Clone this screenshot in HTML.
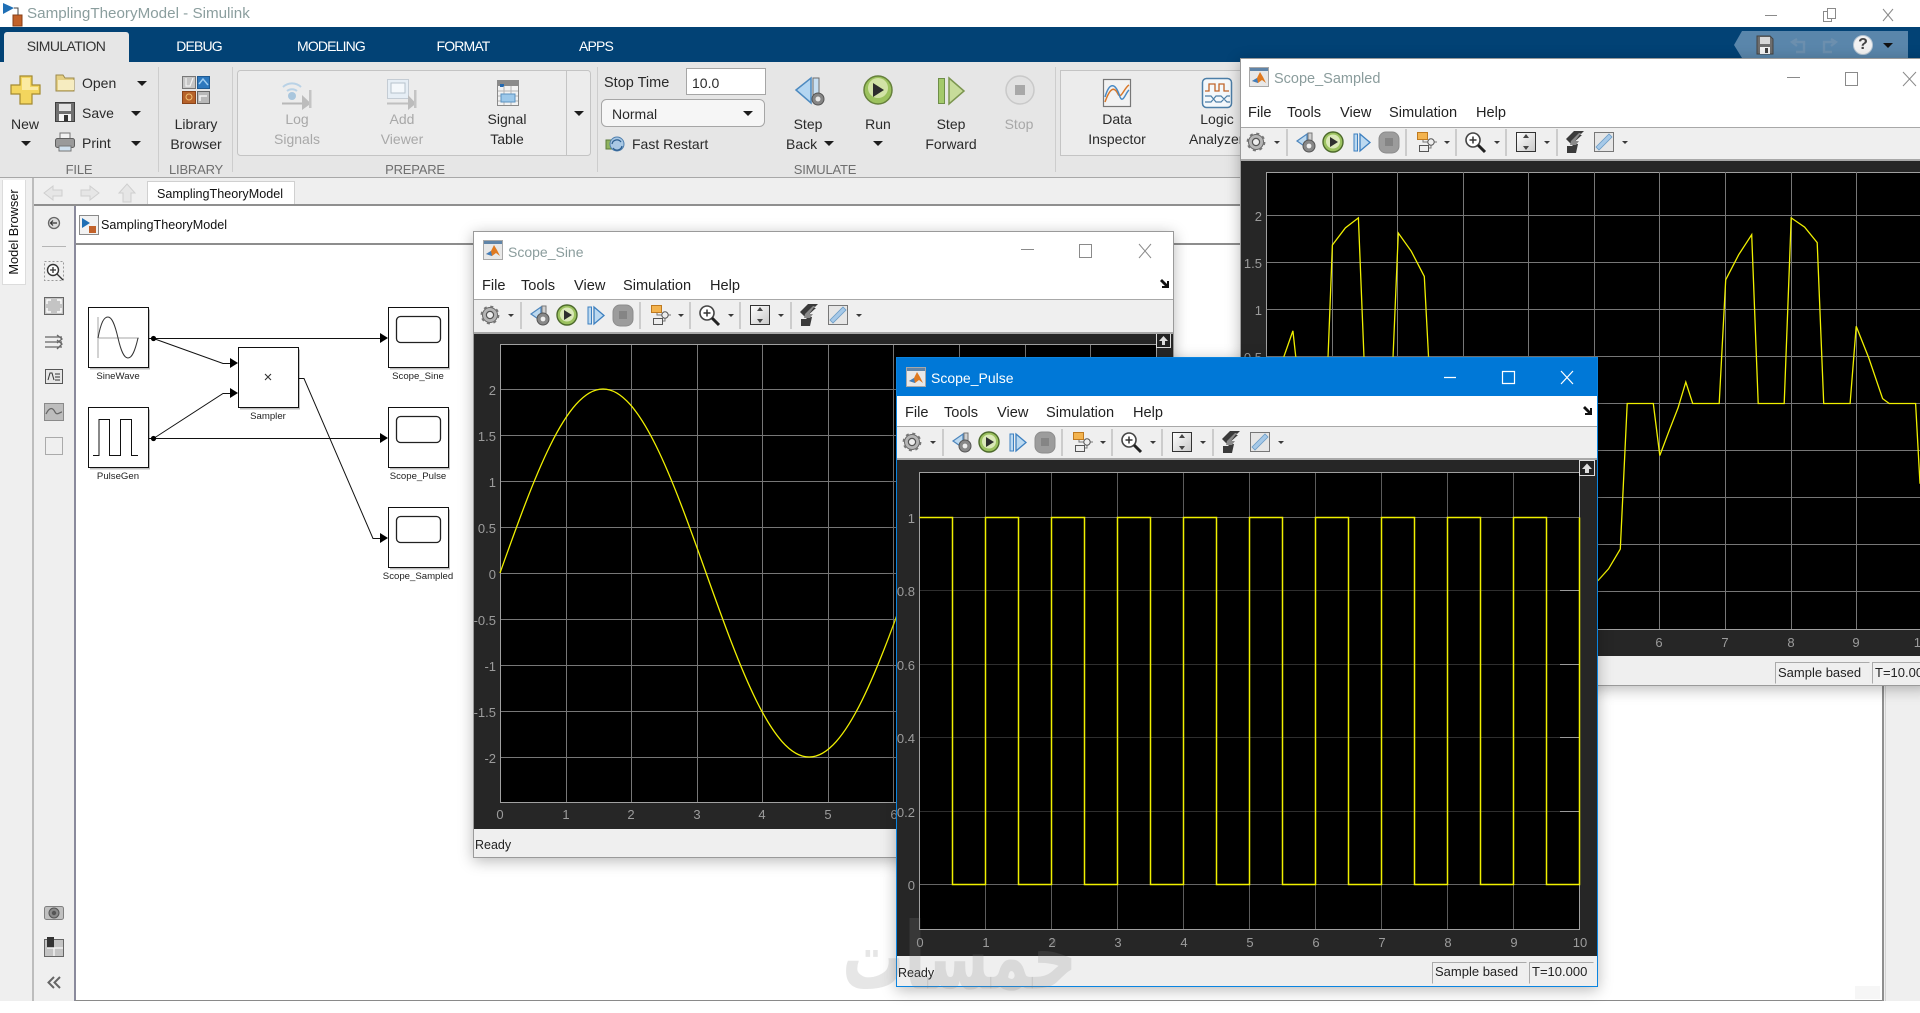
<!DOCTYPE html>
<html lang="en">
<head>
<meta charset="utf-8">
<title>SamplingTheoryModel - Simulink</title>
<style>
html,body{margin:0;padding:0;width:1920px;height:1001px;overflow:hidden;background:#fff;font-family:"Liberation Sans",sans-serif;color:#222}
.a{position:absolute}
.t{position:absolute;white-space:nowrap;line-height:20px;height:20px;font-size:14px;color:#2a2a2a}
.c{text-align:center;width:140px}
.dis{color:#a8a8a8}
.sec{font-size:13px;color:#6f6f6f;letter-spacing:-.2px}
.tab{font-size:14px;color:#fff;letter-spacing:-.85px}
.lbl{font-size:9.6px;color:#222;text-align:center;width:100px}
.win{position:absolute;background:#efefef;box-sizing:border-box;border:1px solid #9a9a9a;box-shadow:0 3px 14px rgba(0,0,0,.28)}
.menu{position:absolute;font-size:14.6px;color:#222;line-height:20px;white-space:nowrap}
.wt{position:absolute;font-size:14px;line-height:20px;color:#8a9c9c;white-space:nowrap}
.ax{position:absolute;font-size:13px;line-height:16px;color:#9c9c9c;white-space:nowrap}
.ax.r{text-align:right;width:30px}
.ax.m{text-align:center;width:30px}
.st{position:absolute;font-size:13px;line-height:20px;color:#222;white-space:nowrap}
.box{position:absolute;box-sizing:border-box;border-left:1px solid #aaa;border-top:1px solid #aaa;border-right:1px solid #eee;border-bottom:1px solid #eee}
svg{position:absolute;display:block;overflow:hidden}
</style>
</head>
<body>

<svg width="0" height="0" style="position:absolute">
<defs>
<symbol id="ml" viewBox="0 0 20 20">
<rect x=".5" y=".5" width="19" height="19" fill="#e8e8e8" stroke="#a8a8a8"/>
<rect x="1" y="1" width="18" height="3" fill="#5f84a8"/>
<path d="M3 14 L8 11 L11 5 L14 10 L17 16 L13 13 L9 16 Z" fill="#e07a20"/>
<path d="M3 14 L8 11 L9 16 Z" fill="#3f7fc0"/>
</symbol>
<symbol id="tb" viewBox="0 0 400 34">
<g fill="#3a3a3a">
<path d="M34 15h6l-3 3z"/><path d="M204 15h6l-3 3z"/><path d="M254 15h6l-3 3z"/><path d="M304 15h6l-3 3z"/><path d="M382 15h6l-3 3z"/>
</g>
<g stroke="#a8a8a8" stroke-width="1">
<path d="M47 3V30M166 3V30M216 3V30M266 3V30M317 3V30"/>
</g>
<circle cx="16" cy="16" r="7.5" fill="#b5b5b5" stroke="#666" stroke-width="1"/>
<circle cx="16" cy="16" r="8.4" fill="none" stroke="#777" stroke-width="2" stroke-dasharray="3 3.6"/>
<circle cx="16" cy="16" r="3.6" fill="#eee" stroke="#555" stroke-width="1.2"/>
<path d="M57 15 L67 8 V22 Z" fill="#bcd9f0" stroke="#4d86bd" stroke-width="1.2"/>
<rect x="68" y="7" width="4" height="12" fill="#d0d0d0" stroke="#777"/>
<circle cx="69" cy="20" r="6" fill="#888" stroke="#555"/><circle cx="69" cy="20" r="2.4" fill="#eee"/>
<circle cx="93" cy="16" r="10" fill="#9cc260" stroke="#4d6a2c" stroke-width="1.4"/>
<circle cx="93" cy="15.5" r="7" fill="#dbe9b8"/>
<path d="M90 11 L98 16 L90 21 Z" fill="#2f2f2f"/>
<rect x="114" y="8" width="3.5" height="17" fill="#bcd9f0" stroke="#3d80c0"/>
<path d="M120 8 L130 16.5 L120 25 Z" fill="#bcd9f0" stroke="#3d80c0" stroke-width="1.3"/>
<rect x="139" y="6" width="20" height="21" rx="7" fill="#9c9c9c" stroke="#8c8c8c"/>
<rect x="145" y="12" width="8" height="8" fill="#858585"/>
<path d="M183 13V16H188M194 16H197M191 19.500V22H189" fill="none" stroke="#777"/>
<rect x="177.500" y="6.500" width="10" height="7" fill="#f3b34e" stroke="#bf7a20"/>
<rect x="179.500" y="19.500" width="9" height="6" fill="#eee" stroke="#555"/>
<circle cx="191" cy="16" r="3.2" fill="#eee" stroke="#555"/>
<circle cx="233" cy="14" r="7" fill="#fff" stroke="#444" stroke-width="1.6"/>
<path d="M229.5 14h7M233 10.500v7" stroke="#333" stroke-width="1.5"/>
<path d="M238 19 L245 26" stroke="#222" stroke-width="3"/>
<defs><linearGradient id="sg" x1="0" y1="0" x2="1" y2="1"><stop offset="0" stop-color="#fff"/><stop offset="1" stop-color="#c8c8c8"/></linearGradient></defs>
<rect x="276.500" y="6.500" width="19" height="19" fill="url(#sg)" stroke="#333"/>
<path d="M286 8l-3 4h6zM286 24l-3-4h6z" fill="#444"/>
<path d="M334 5 H344 L340 9 H342 L332 18 H338 L336 27 H327 V20 H333 L326 13 Z" fill="#3a3a3a"/>
<path d="M331 15 L339 7 H341 L335 15 H339 L336 19 H330 Z" fill="#8a8a8a"/>
<rect x="354.500" y="6.500" width="19" height="19" fill="#e6e6e6" stroke="#777"/>
<path d="M356 21 L369 8 L372 11 L359 24 Z" fill="#a6c9e8" stroke="#6b9cc6" stroke-width=".8"/>
</symbol>
<symbol id="sb" viewBox="0 0 20 20">
<path d="M2 1H15L18 4V19H2Z" fill="#6e6e6e" stroke="#444"/>
<rect x="5" y="2" width="10" height="7" fill="#d8d8d8"/>
<rect x="5" y="12" width="10" height="7" fill="#f2f2f2"/>
<rect x="10" y="13" width="3" height="5" fill="#444"/>
</symbol>
</defs>
</svg>

<!-- Main window background -->
<div class="a" style="left:0;top:0;width:1920px;height:27px;background:#fff"></div>
<div class="a" style="left:0;top:27px;width:1920px;height:35px;background:#024275"></div>
<div class="a" style="left:4px;top:32px;width:125px;height:30px;background:#e6e6e6;border-radius:3px 3px 0 0"></div>
<div class="a" style="left:0;top:62px;width:1920px;height:115px;background:#e6e6e6"></div>
<div class="a" style="left:0;top:177px;width:1920px;height:1px;background:#a8a8a8"></div>
<div class="a" style="left:0;top:178px;width:1920px;height:823px;background:#efefef"></div>
<div class="a" style="left:34px;top:204px;width:1850px;height:2px;background:#8f8f8f"></div>
<div class="a" style="left:75px;top:206px;width:1808px;height:37px;background:#fff"></div>
<div class="a" style="left:75px;top:243px;width:1808px;height:2px;background:#8d8d8d"></div>
<div class="a" style="left:75px;top:245px;width:1808px;height:755px;background:#fff"></div>
<div class="a" style="left:74px;top:206px;width:1.500px;height:795px;background:#8a8a9c"></div>
<div class="a" style="left:75px;top:1000px;width:1808px;height:1px;background:#8a8a8a"></div>
<div class="a" style="left:1882px;top:206px;width:1.500px;height:795px;background:#8f8f8f"></div>
<div class="a" style="left:1885px;top:206px;width:1px;height:795px;background:#d4d4d4"></div>
<div class="a" style="left:32px;top:178px;width:1.500px;height:823px;background:#bdbdbd"></div>
<div class="a" style="left:2px;top:180px;width:24px;height:105px;background:#fff;border:1px solid #dcdcdc;border-top:none;box-sizing:border-box"></div>
<div class="a" style="left:147px;top:181px;width:148px;height:23px;background:#fff;border:1px solid #d0d0d0;border-bottom:none;box-sizing:border-box"></div>
<div class="a" style="left:1855px;top:986px;width:25px;height:13px;background:#f6f6f6"></div>

<!-- Page graphics -->
<svg class="a" style="left:0;top:0" width="1920" height="1001" viewBox="0 0 1920 1001">
<!-- app icon -->
<path d="M3 3 L14 8 L3 14 Z" fill="#1f6fb5"/><rect x="13" y="15" width="9" height="11" fill="#c2622a" stroke="#8a3f15"/>
<path d="M14 8 H18 V15" fill="none" stroke="#444"/>
<!-- ribbon separators -->
<path d="M158.500 67V172M232.500 67V172M597.500 67V172M1055.500 67V172" stroke="#cdcdcd"/>
<rect x="237.500" y="70.500" width="353" height="85" rx="3" fill="#ececec" stroke="#c4c4c4"/>
<path d="M566.500 71V155" stroke="#c4c4c4"/>
<rect x="1060.500" y="70.500" width="190" height="85" fill="#ececec" stroke="#c4c4c4"/>
<!-- Stop time input -->
<rect x="686.500" y="68.500" width="79" height="26" fill="#fff" stroke="#a6a6a6"/>
<rect x="601.500" y="99.500" width="163" height="27" rx="5" fill="#f6f6f6" stroke="#a6a6a6"/>
<!-- arrows -->
<g fill="#1c1c1c">
<path d="M21 141h10l-5 5z"/><path d="M137 81h10l-5 5z"/><path d="M131 111h10l-5 5z"/><path d="M131 141h10l-5 5z"/>
<path d="M574 111h10l-5 5z"/><path d="M743 111h10l-5 5z"/><path d="M824 141h10l-5 5z"/><path d="M873 141h10l-5 5z"/>
</g>
<!-- New -->
<path d="M20 76H32V85H40V94H32V104H20V94H11V85H20Z" fill="#f3d55e" stroke="#a48a30" stroke-width="1.200"/>
<path d="M22 78H30V87H38V90H22Z" fill="#fbeaa2"/>
<!-- Open -->
<path d="M56 75H63L65 78H74V91H56Z" fill="#e5cf82" stroke="#9c8a4c"/>
<path d="M58 80H74V90H58Z" fill="#f6ecc0"/>
<!-- Save -->
<rect x="55.500" y="102.500" width="19" height="19" fill="#707070" stroke="#3f3f3f"/>
<rect x="59" y="104" width="12" height="7" fill="#e4e4e4"/>
<rect x="59" y="114" width="12" height="7" fill="#f5f5f5"/>
<rect x="64" y="115" width="4" height="6" fill="#333"/>
<!-- Print -->
<rect x="60" y="133" width="10" height="6" fill="#f2f2f2" stroke="#777"/>
<rect x="55.500" y="138.500" width="19" height="9" rx="2" fill="#9a9a9a" stroke="#5f5f5f"/>
<rect x="59" y="146" width="12" height="5" fill="#cfe0ee" stroke="#777"/>
<!-- Library -->
<rect x="182.500" y="76.500" width="13" height="12" fill="#c5c5c5" stroke="#777"/>
<path d="M186 78V86H190L193 78" fill="none" stroke="#f2f2f2" stroke-width="1.200"/>
<rect x="197.500" y="76.500" width="12" height="12" fill="#2e78bd" stroke="#1f5a92"/>
<path d="M199 84 L203 79 L208 85" stroke="#9ccbf0" stroke-width="1.500" fill="none"/>
<rect x="182.500" y="91.500" width="13" height="12" fill="#b6622a" stroke="#8a4318"/>
<circle cx="189" cy="97" r="3" fill="none" stroke="#f0c070"/>
<rect x="197.500" y="91.500" width="12" height="12" fill="#b8b8b8" stroke="#666"/>
<path d="M200 101V96H207" fill="none" stroke="#f2f2f2" stroke-width="1.500"/>
<!-- Log signals -->
<g fill="none" stroke="#b9d2e6" stroke-width="2"><path d="M283 87a13 13 0 0 1 18 0"/><path d="M287 91a8 8 0 0 1 10 0"/></g>
<circle cx="292" cy="96" r="4" fill="#a9c6dd"/>
<path d="M282 103.500H303" stroke="#b8b8b8" stroke-width="2"/>
<path d="M302 95L311 103.500L302 110Z" fill="#bcbcbc"/>
<rect x="309" y="90" width="2.500" height="18" fill="#c4c4c4"/>
<!-- Add viewer -->
<rect x="387.500" y="79.500" width="21" height="19" fill="#e6eef5" stroke="#c4ccd4"/>
<rect x="391" y="83" width="14" height="10" fill="#f4f8fb" stroke="#b6c2cc"/>
<path d="M387 103.500H409" stroke="#c0c0c0" stroke-width="2"/>
<path d="M408 95L416 103.500L408 110Z" fill="#bcbcbc"/>
<rect x="414" y="90" width="2.500" height="18" fill="#c4c4c4"/>
<!-- Signal table -->
<rect x="497.500" y="80.500" width="21" height="25" fill="#f2f2f2" stroke="#8a8a8a"/>
<rect x="498" y="81" width="20" height="5" fill="#8a8a8a"/>
<rect x="500" y="84" width="4" height="3" fill="#2268b0"/>
<path d="M498 91H518M498 96H518M498 101H518M504 86V105M511 86V105" stroke="#b4b4b4"/>
<rect x="501" y="94" width="14" height="8" fill="#9cc8ea" stroke="#5b92c0"/>
<!-- Fast restart -->
<rect x="606" y="140" width="6" height="9" fill="#8fb35f" stroke="#5a7a3a"/>
<circle cx="617" cy="144" r="7" fill="#a9c8e4" stroke="#4f7fae"/>
<path d="M612 144a5 5 0 0 1 9-2M622 146a5 5 0 0 1-9 2" fill="none" stroke="#2d5e8f" stroke-width="1.300"/>
<!-- Step back -->
<path d="M796 90 L811 78 V103 Z" fill="#b4d6f1" stroke="#4d8ac0" stroke-width="1.500"/>
<rect x="813" y="78" width="6" height="24" fill="#c7dff3" stroke="#6c6c6c"/>
<circle cx="818" cy="99" r="6" fill="#858585" stroke="#555"/><circle cx="818" cy="99" r="2.500" fill="#e6e6e6"/>
<!-- Run -->
<circle cx="878" cy="90" r="14" fill="#9cc25e" stroke="#66813c" stroke-width="1.500"/>
<circle cx="878" cy="88" r="10" fill="#d2e3a6"/>
<path d="M873 83 L884 90 L873 97 Z" fill="#2d2d2d"/>
<!-- Step forward -->
<rect x="938.500" y="78.500" width="6" height="25" fill="#a3c96b" stroke="#6e8e48"/>
<path d="M949 78 L964 91 L949 104 Z" fill="#c7dc9a" stroke="#7c9650" stroke-width="1.500"/>
<!-- Stop -->
<circle cx="1020" cy="90" r="14" fill="#e1e1e1" stroke="#c9c9c9" stroke-width="1.500"/>
<rect x="1015" y="85" width="10" height="10" fill="#a8a8a8"/>
<!-- Data inspector -->
<rect x="1103.500" y="79.500" width="27" height="27" fill="#f2f2f2" stroke="#777" stroke-width="1.200"/>
<path d="M1105 102 C1110 88 1114 86 1118 94 C1121 100 1124 88 1129 85" fill="none" stroke="#d9782a" stroke-width="1.500"/>
<path d="M1105 97 C1110 80 1116 84 1120 97 C1123 104 1126 92 1129 90" fill="none" stroke="#4a8ac4" stroke-width="1.500"/>
<!-- Logic analyzer -->
<rect x="1202.500" y="78.500" width="29" height="29" rx="4" fill="#f4f8fb" stroke="#4d7fa8" stroke-width="1.500"/>
<path d="M1205 91H1209V84H1215V91H1219V84H1224V91H1229" fill="none" stroke="#c0642a" stroke-width="1.300"/>
<path d="M1205 96H1211L1216 102H1221L1227 96H1230M1205 102H1211L1216 96H1221L1227 102H1230" fill="none" stroke="#4d7fa8" stroke-width="1.200"/>
<!-- Title buttons -->
<path d="M1765 15.500H1777" stroke="#8a8a8a"/>
<rect x="1823.500" y="11.500" width="8" height="10" fill="#fff" stroke="#8a8a8a"/>
<rect x="1827.500" y="8.500" width="8" height="10" fill="#fff" stroke="#8a8a8a"/>
<path d="M1883 9L1893 21M1893 9L1883 21" stroke="#8a8a8a"/>
<!-- Quick access -->
<path d="M1734 45L1742 31H1908V58H1742Z" fill="#5a86ab"/>
<use href="#sb" x="1755" y="34" width="20" height="22"/>
<path d="M1792 42H1804V52H1796M1797 39L1792 42L1797 46" fill="none" stroke="#6c8fae" stroke-width="2.400"/>
<path d="M1836 42H1824V52H1832M1831 39L1836 42L1831 46" fill="none" stroke="#6c8fae" stroke-width="2.400"/>
<circle cx="1863" cy="45" r="9.500" fill="#f2f2f2" stroke="#b4c4d2"/>
<path d="M1883 43h10l-5 5z" fill="#111"/>
<!-- Breadcrumb arrows -->
<g fill="#e6e6e6" stroke="#cfcfcf">
<path d="M44 193L53 186V190H62V196H53V200Z"/>
<path d="M99 193L90 186V190H81V196H90V200Z"/>
<path d="M127 184L135 193H131V202H123V193H119Z"/>
</g>
<!-- Address -->
<rect x="79.500" y="215.500" width="19" height="19" fill="#f2f2f2" stroke="#8a8a8a"/>
<path d="M82 218L90 223L82 228Z" fill="#1f6fb5"/><rect x="89" y="226" width="7" height="7" fill="#c2622a"/>
<!-- left strip -->
<circle cx="54" cy="223" r="5.500" fill="#dcdcdc" stroke="#666" stroke-width="1.300"/>
<path d="M57 223H51M53 220.500L50.500 223L53 225.500" fill="none" stroke="#333" stroke-width="1.200"/>
<path d="M42 246.500H66" stroke="#b5b5b5"/>
<rect x="44.500" y="261.500" width="19" height="19" fill="#efefef" stroke="#999" stroke-dasharray="2 2"/>
<circle cx="53" cy="270" r="5.500" fill="#fff" stroke="#333" stroke-width="1.400"/>
<path d="M50 270H56M53 267V273M57 274L63 280" stroke="#333" stroke-width="1.300"/>
<rect x="44.500" y="297.500" width="19" height="17" fill="#c4c4c4" stroke="#666"/>
<path d="M47 304V300H51M61 304V300H57M47 308V312H51M61 308V312H57" fill="none" stroke="#fff" stroke-width="1.400"/>
<path d="M45 337H62M45 342H62M45 347H62M57 335L62 339L57 343M57 340L62 344L57 349" fill="none" stroke="#666" stroke-width="1.300"/>
<rect x="45.500" y="369.500" width="17" height="14" fill="#e6e6e6" stroke="#555"/>
<path d="M48 380L50 373H52L54 380M55 374H60M55 377H60M55 380H60" fill="none" stroke="#333"/>
<rect x="44.500" y="403.500" width="19" height="17" fill="#bdbdbd" stroke="#8a8a8a"/>
<path d="M46 414C50 406 53 408 55 412C57 416 60 412 62 412" fill="none" stroke="#666" stroke-width="1.300"/>
<rect x="45.500" y="437.500" width="17" height="17" fill="#efefef" stroke="#aaa"/>
<rect x="44.500" y="906.500" width="19" height="13" rx="2" fill="#c0c0c0" stroke="#808080"/>
<circle cx="54" cy="913" r="5" fill="#8a8a8a" stroke="#555"/><circle cx="54" cy="913" r="2.200" fill="#555"/>
<rect x="44.500" y="939.500" width="19" height="17" fill="#c4c4c4" stroke="#666"/>
<rect x="47" y="937" width="7" height="11" fill="#333"/>
<path d="M47 948H63M54 948V956" stroke="#f2f2f2" stroke-width="1.500"/>
<path d="M54 977L48.500 982.500L54 988M60 977L54.500 982.500L60 988" fill="none" stroke="#666" stroke-width="2"/>

<!-- Model blocks -->
<g fill="rgba(0,0,0,.25)">
<rect x="90" y="309.500" width="60" height="60"/><rect x="90" y="409.500" width="60" height="60"/><rect x="240" y="349.500" width="60" height="60"/>
<rect x="390" y="309.500" width="60" height="60"/><rect x="390" y="409.500" width="60" height="60"/><rect x="390" y="509.500" width="60" height="60"/>
</g>
<g fill="#fff" stroke="#111" stroke-width="1">
<rect x="88.500" y="307.500" width="60" height="60"/><rect x="88.500" y="407.500" width="60" height="60"/><rect x="238.500" y="347.500" width="60" height="60"/>
<rect x="388.500" y="307.500" width="60" height="60"/><rect x="388.500" y="407.500" width="60" height="60"/><rect x="388.500" y="507.500" width="60" height="60"/>
</g>
<g fill="none" stroke="#222" stroke-width="1.300">
<rect x="396.500" y="316.500" width="44" height="26" rx="4"/><rect x="396.500" y="416.500" width="44" height="26" rx="4"/><rect x="396.500" y="516.500" width="44" height="26" rx="4"/>
</g>
<path d="M98 317V358M98 338H139" stroke="#c4c4c4" stroke-width="1.500"/>
<path d="M98 338C101 322 104 317 108 317C112 317 115 325 118 338C121 351 124 358 128 358C132 358 135 351 138 338" fill="none" stroke="#333"/>
<path d="M93 455.500H99V419.500H109.500V455.500H120.500V419.500H131.500V455.500H138" fill="none" stroke="#111"/>
<path d="M265 374L271 380M271 374L265 380" stroke="#333" stroke-width="1.100"/>
<!-- Wires -->
<g fill="none" stroke="#111" stroke-width="1">
<path d="M149 338.500H380"/><path d="M149 438.500H380"/>
<path d="M153.500 338.500L223 363.500H231"/><path d="M153.500 438.500L223 393.500H231"/>
<path d="M299 378.500H304L373 538.500H381"/>
</g>
<g fill="#000">
<circle cx="153.500" cy="338.500" r="2.600"/><circle cx="153.500" cy="438.500" r="2.600"/>
<path d="M388 338L380 333V343Z"/><path d="M388 438L380 433V443Z"/><path d="M388 538L380 533V543Z"/>
<path d="M238 363L230 358V368Z"/><path d="M238 393L230 388V398Z"/>
</g>
</svg>

<!-- Page text -->
<div class="t" style="left:27px;top:4px;font-size:15.200px;color:#8b9e9e">SamplingTheoryModel - Simulink</div>
<div class="t c tab" style="left:-4px;top:36px;color:#333;letter-spacing:-.6px">SIMULATION</div>
<div class="t c tab" style="left:129px;top:36px">DEBUG</div>
<div class="t c tab" style="left:261px;top:36px">MODELING</div>
<div class="t c tab" style="left:393px;top:36px">FORMAT</div>
<div class="t c tab" style="left:526px;top:36px">APPS</div>
<div class="t" style="left:1857px;top:35px;font-weight:bold;font-size:16px;color:#444;width:12px;text-align:center">?</div>

<div class="t c" style="left:-45px;top:114px">New</div>
<div class="t" style="left:82px;top:73px">Open</div>
<div class="t" style="left:82px;top:103px">Save</div>
<div class="t" style="left:82px;top:133px">Print</div>
<div class="t c sec" style="left:9px;top:160px">FILE</div>
<div class="t c" style="left:126px;top:114px">Library</div>
<div class="t c" style="left:126px;top:134px">Browser</div>
<div class="t c sec" style="left:126px;top:160px">LIBRARY</div>
<div class="t c dis" style="left:227px;top:109px">Log</div>
<div class="t c dis" style="left:227px;top:129px">Signals</div>
<div class="t c dis" style="left:332px;top:109px">Add</div>
<div class="t c dis" style="left:332px;top:129px">Viewer</div>
<div class="t c" style="left:437px;top:109px">Signal</div>
<div class="t c" style="left:437px;top:129px">Table</div>
<div class="t c sec" style="left:345px;top:160px">PREPARE</div>
<div class="t" style="left:604px;top:73px;font-size:14.500px">Stop Time</div>
<div class="t" style="left:692px;top:73px">10.0</div>
<div class="t" style="left:612px;top:104px">Normal</div>
<div class="t" style="left:632px;top:134px">Fast Restart</div>
<div class="t c" style="left:738px;top:114px">Step</div>
<div class="t" style="left:786px;top:134px">Back</div>
<div class="t c" style="left:808px;top:114px">Run</div>
<div class="t c" style="left:881px;top:114px">Step</div>
<div class="t c" style="left:881px;top:134px">Forward</div>
<div class="t c dis" style="left:949px;top:114px">Stop</div>
<div class="t c sec" style="left:755px;top:160px">SIMULATE</div>
<div class="t c" style="left:1047px;top:109px">Data</div>
<div class="t c" style="left:1047px;top:129px">Inspector</div>
<div class="t c" style="left:1147px;top:109px">Logic</div>
<div class="t" style="left:1189px;top:129px">Analyzer</div>

<div class="t" style="left:-36px;top:222px;width:100px;text-align:center;font-size:12.800px;color:#111;transform:rotate(-90deg)">Model Browser</div>
<div class="t" style="left:157px;top:184px;font-size:12.600px;color:#111">SamplingTheoryModel</div>
<div class="t" style="left:101px;top:215px;font-size:12.600px;color:#111">SamplingTheoryModel</div>

<div class="t lbl" style="left:68px;top:367px">SineWave</div>
<div class="t lbl" style="left:68px;top:467px">PulseGen</div>
<div class="t lbl" style="left:218px;top:407px">Sampler</div>
<div class="t lbl" style="left:368px;top:367px">Scope_Sine</div>
<div class="t lbl" style="left:368px;top:467px">Scope_Pulse</div>
<div class="t lbl" style="left:368px;top:567px">Scope_Sampled</div>

<!-- Scope_Sampled -->
<div class="win" style="left:1240px;top:58px;width:690px;height:628px">
  <div class="a" style="left:0;top:0;width:100%;height:68px;background:#fff;border-bottom:1px solid #a8a8a8"></div>
  <div class="a" style="left:0;top:100px;width:100%;height:2px;background:#a8a8a8"></div>
  <div class="a" style="left:0;top:102px;width:100%;height:495px;background:#262626"></div>
</div>
<svg style="left:1249px;top:67px" width="20" height="20"><use href="#ml" width="20" height="20"/></svg>
<div class="wt" style="left:1274px;top:69px;font-size:14.500px">Scope_Sampled</div>
<svg style="left:1240px;top:59px" width="680" height="40"><path d="M547 18.500H560M605.500 13.500H617.500V26.500H605.500ZM663 13L676 27M676 13L663 27" fill="none" stroke="#8a8a8a"/></svg>
<div class="menu" style="left:1248px;top:103px">File</div>
<div class="menu" style="left:1287px;top:103px">Tools</div>
<div class="menu" style="left:1340px;top:103px">View</div>
<div class="menu" style="left:1389px;top:103px">Simulation</div>
<div class="menu" style="left:1476px;top:103px">Help</div>
<svg style="left:1240px;top:126px" width="400" height="34"><use href="#tb" width="400" height="34"/></svg>
<svg style="left:1240px;top:160px" width="680" height="500" viewBox="1240 160 680 500">
  <rect x="1266.500" y="172.500" width="700" height="457" fill="#000" stroke="#a0a0a0"/>
  <path d="M1332.500 172V629M1397.500 172V629M1463.500 172V629M1528.500 172V629M1594.500 172V629M1659.500 172V629M1725.500 172V629M1791.500 172V629M1856.500 172V629M1267 215.500H1920M1267 262.500H1920M1267 309.500H1920M1267 356.500H1920M1267 403.500H1920M1267 450.500H1920M1267 497.500H1920M1267 544.500H1920M1267 591.500H1920" stroke="#777"/>
  <path d="M1283.400 358L1292.900 330.800L1295.900 358M1328 358L1332.400 245L1345.400 227.800L1358.400 217.900L1364 358M1393 358L1398.300 233L1411.300 251.300L1424.300 276.400L1428.600 358M1597.800 580.800L1608.600 568.800L1620.300 549.100L1627.200 403.500H1653.300L1659.800 455.500L1669.300 430.300L1678 408L1685.800 382.100L1692.700 403.500H1719.200L1725.700 279.800L1738.700 254.700L1751.700 234.700L1758.200 403.500H1784.200L1791.200 217.900L1804.600 227.100L1817.200 242.600L1823.700 403.500H1850.100L1856.200 326.300L1868.800 358L1882.600 398.600L1889.200 403.500H1915.600L1920 483.700" fill="none" stroke="#f0f000" stroke-width="1.300"/>
</svg>
<div class="ax r" style="left:1232px;top:209px">2</div>
<div class="ax r" style="left:1232px;top:256px">1.5</div>
<div class="ax r" style="left:1232px;top:303px">1</div>
<div class="ax r" style="left:1232px;top:350px">0.5</div>
<div class="ax m" style="left:1644px;top:635px">6</div>
<div class="ax m" style="left:1710px;top:635px">7</div>
<div class="ax m" style="left:1776px;top:635px">8</div>
<div class="ax m" style="left:1841px;top:635px">9</div>
<div class="ax m" style="left:1906px;top:635px">10</div>
<div class="box" style="left:1775px;top:662px;width:95px;height:22px"></div>
<div class="box" style="left:1872px;top:662px;width:60px;height:22px"></div>
<div class="st" style="left:1778px;top:663px">Sample based</div>
<div class="st" style="left:1875px;top:663px">T=10.000</div>

<!-- Scope_Sine -->
<div class="win" style="left:473px;top:231px;width:701px;height:627px">
  <div class="a" style="left:0;top:0;width:100%;height:67px;background:#fff;border-bottom:1px solid #a8a8a8"></div>
  <div class="a" style="left:0;top:100px;width:100%;height:2px;background:#a8a8a8"></div>
  <div class="a" style="left:0;top:102px;width:100%;height:495px;background:#262626"></div>
</div>
<svg style="left:483px;top:240px" width="20" height="20"><use href="#ml" width="20" height="20"/></svg>
<div class="wt" style="left:508px;top:242px">Scope_Sine</div>
<svg style="left:474px;top:231px" width="700" height="40"><path d="M547 18.500H560M605.500 13.500H617.500V26.500H605.500ZM665 13L677 27M677 13L665 27" fill="none" stroke="#8a8a8a"/></svg>
<div class="menu" style="left:482px;top:276px">File</div>
<div class="menu" style="left:521px;top:276px">Tools</div>
<div class="menu" style="left:574px;top:276px">View</div>
<div class="menu" style="left:623px;top:276px">Simulation</div>
<div class="menu" style="left:710px;top:276px">Help</div>
<svg style="left:1159px;top:278px" width="12" height="12"><path d="M1 3L3 1L8 6V3H10V10H3V8H6Z" fill="#111"/></svg>
<svg style="left:474px;top:299px" width="400" height="34"><use href="#tb" width="400" height="34"/></svg>
<svg style="left:474px;top:334px" width="700" height="496" viewBox="474 334 700 496">
  <rect x="500.500" y="344.500" width="656" height="458" fill="#000" stroke="#a0a0a0"/>
  <path d="M566.500 345V802M631.500 345V802M697.500 345V802M762.500 345V802M828.500 345V802M893.500 345V802M959.500 345V802M1025.500 345V802M1090.500 345V802M501 389.500H1156M501 435.500H1156M501 481.500H1156M501 527.500H1156M501 573.500H1156M501 619.500H1156M501 665.500H1156M501 711.500H1156M501 757.500H1156" stroke="#777"/>
  <path d="M500 573C533.600 478.700 565.750 389 603.040 389C640.330 389 672.480 478.700 706.080 573C739.690 667.300 771.830 757 809.120 757C846.410 757 878.560 667.300 912.160 573" fill="none" stroke="#f0f000" stroke-width="1.300"/>
  <rect x="1156.500" y="333.500" width="14" height="14" fill="#222" stroke="#ddd"/>
  <path d="M1163.500 336L1168 341H1165V345H1162V341H1159Z" fill="#ddd"/>
</svg>
<div class="ax r" style="left:466px;top:383px">2</div>
<div class="ax r" style="left:466px;top:429px">1.5</div>
<div class="ax r" style="left:466px;top:475px">1</div>
<div class="ax r" style="left:466px;top:521px">0.5</div>
<div class="ax r" style="left:466px;top:567px">0</div>
<div class="ax r" style="left:466px;top:613px">-0.5</div>
<div class="ax r" style="left:466px;top:659px">-1</div>
<div class="ax r" style="left:466px;top:705px">-1.5</div>
<div class="ax r" style="left:466px;top:751px">-2</div>
<div class="ax m" style="left:485px;top:807px">0</div>
<div class="ax m" style="left:551px;top:807px">1</div>
<div class="ax m" style="left:616px;top:807px">2</div>
<div class="ax m" style="left:682px;top:807px">3</div>
<div class="ax m" style="left:747px;top:807px">4</div>
<div class="ax m" style="left:813px;top:807px">5</div>
<div class="ax m" style="left:879px;top:807px">6</div>
<div class="st" style="left:475px;top:835px;font-size:12.500px">Ready</div>

<!-- Scope_Pulse -->
<div class="win" style="left:896px;top:357px;width:702px;height:630px;border:1.500px solid #0a84e0">
  <div class="a" style="left:0;top:0;width:100%;height:38px;background:#0078d7"></div>
  <div class="a" style="left:0;top:38px;width:100%;height:30px;background:#fff;border-bottom:1px solid #a8a8a8"></div>
  <div class="a" style="left:0;top:100px;width:100%;height:2px;background:#a8a8a8"></div>
  <div class="a" style="left:0;top:102px;width:100%;height:496px;background:#262626"></div>
</div>
<svg style="left:906px;top:367px" width="20" height="20"><use href="#ml" width="20" height="20"/></svg>
<div class="wt" style="left:931px;top:368px;color:#fff">Scope_Pulse</div>
<svg style="left:896px;top:358px" width="702" height="40"><path d="M548 19.500H560M606.500 13.500H618.500V25.500H606.500ZM665 13L677 26M677 13L665 26" fill="none" stroke="#fff" stroke-width="1.200"/></svg>
<div class="menu" style="left:905px;top:403px">File</div>
<div class="menu" style="left:944px;top:403px">Tools</div>
<div class="menu" style="left:997px;top:403px">View</div>
<div class="menu" style="left:1046px;top:403px">Simulation</div>
<div class="menu" style="left:1133px;top:403px">Help</div>
<svg style="left:1582px;top:405px" width="12" height="12"><path d="M1 3L3 1L8 6V3H10V10H3V8H6Z" fill="#111"/></svg>
<svg style="left:896px;top:426px" width="400" height="34"><use href="#tb" width="400" height="34"/></svg>
<svg style="left:898px;top:460px" width="698" height="497" viewBox="898 460 698 497">
  <rect x="919.500" y="472.500" width="660" height="457" fill="#000" stroke="#a0a0a0"/>
  <path d="M985.500 473V929M1051.500 473V929M1117.500 473V929M1183.500 473V929M1249.500 473V929M1315.500 473V929M1381.500 473V929M1447.500 473V929M1513.500 473V929" stroke="#5c5c5c"/>
  <path d="M920 590.500H1579M920 664.500H1579M920 737.500H1579M920 811.500H1579" stroke="#2e2e2e"/>
  <path d="M920 517.500H1579M920 884.500H1579" stroke="#666"/>
  <path d="M1560 590.500H1579M1560 664.500H1579M1560 737.500H1579M1560 811.500H1579" stroke="#9a9a9a"/>
  <path d="M919.500 517.500H952.500V884.500H985.500V517.500H1018.500V884.500H1051.500V517.500H1084.500V884.500H1117.500V517.500H1150.500V884.500H1183.500V517.500H1216.500V884.500H1249.500V517.500H1282.500V884.500H1315.500V517.500H1348.500V884.500H1381.500V517.500H1414.500V884.500H1447.500V517.500H1480.500V884.500H1513.500V517.500H1546.500V884.500H1579.500V517.500" fill="none" stroke="#f0f000" stroke-width="1.500"/>
  <rect x="1579.500" y="460.500" width="15" height="15" fill="#222" stroke="#ddd"/>
  <path d="M1587 463.500L1592 469H1589V473H1585V469H1582Z" fill="#ddd"/>
</svg>
<div class="ax r" style="left:885px;top:511px">1</div>
<div class="ax r" style="left:885px;top:584px">0.8</div>
<div class="ax r" style="left:885px;top:658px">0.6</div>
<div class="ax r" style="left:885px;top:731px">0.4</div>
<div class="ax r" style="left:885px;top:805px">0.2</div>
<div class="ax r" style="left:885px;top:878px">0</div>
<div class="ax m" style="left:905px;top:935px">0</div>
<div class="ax m" style="left:971px;top:935px">1</div>
<div class="ax m" style="left:1037px;top:935px">2</div>
<div class="ax m" style="left:1103px;top:935px">3</div>
<div class="ax m" style="left:1169px;top:935px">4</div>
<div class="ax m" style="left:1235px;top:935px">5</div>
<div class="ax m" style="left:1301px;top:935px">6</div>
<div class="ax m" style="left:1367px;top:935px">7</div>
<div class="ax m" style="left:1433px;top:935px">8</div>
<div class="ax m" style="left:1499px;top:935px">9</div>
<div class="ax m" style="left:1565px;top:935px">10</div>
<div class="st" style="left:898px;top:963px;font-size:12.500px">Ready</div>
<div class="box" style="left:1432px;top:962px;width:95px;height:22px"></div>
<div class="box" style="left:1529px;top:962px;width:65px;height:22px"></div>
<div class="st" style="left:1435px;top:962px">Sample based</div>
<div class="st" style="left:1532px;top:962px">T=10.000</div>

<!-- Watermark -->
<div class="a" dir="rtl" style="left:845px;top:920px;width:232px;height:74px;line-height:74px;text-align:center;font-family:'DejaVu Sans',sans-serif;font-weight:bold;font-size:62px;color:rgba(128,128,128,.2);white-space:nowrap;overflow:hidden;transform:scaleY(1.5)">خمسات</div>

</body>
</html>
